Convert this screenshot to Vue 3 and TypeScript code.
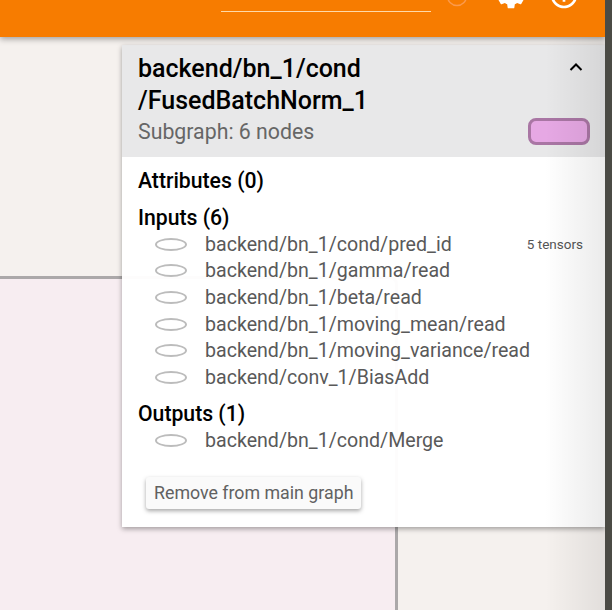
<template>
  <div class="screen">
    <div class="main">
      <!-- 顶部工具栏，图标上半部分被截掉 -->
      <div class="toolbar">
        <div class="search-line"></div>
        <svg class="tool-icon ring" viewBox="0 0 24 24" width="24" height="24">
          <circle cx="12" cy="12" r="9.5" fill="none" stroke="#fb9a4c" stroke-width="1.5" />
        </svg>
        <svg class="tool-icon gear" viewBox="0 0 24 24" width="32" height="32">
          <path fill="#fff" d="M19.43 12.98c.04-.32.07-.64.07-.98s-.03-.66-.07-.98l2.11-1.65c.19-.15.24-.42.12-.64l-2-3.46c-.12-.22-.39-.3-.61-.22l-2.49 1c-.52-.4-1.08-.73-1.69-.98l-.38-2.65C14.46 2.18 14.25 2 14 2h-4c-.25 0-.46.18-.49.42l-.38 2.65c-.61.25-1.17.59-1.69.98l-2.49-1c-.23-.09-.49 0-.61.22l-2 3.46c-.13.22-.07.49.12.64l2.11 1.65c-.04.32-.07.65-.07.98s.03.66.07.98l-2.11 1.65c-.19.15-.24.42-.12.64l2 3.46c.12.22.39.3.61.22l2.49-1c.52.4 1.08.73 1.69.98l.38 2.65c.03.24.24.42.49.42h4c.25 0 .46-.18.49-.42l.38-2.65c.61-.25 1.17-.59 1.69-.98l2.49 1c.23.09.49 0 .61-.22l2-3.46c.12-.22.07-.49-.12-.64l-2.11-1.65zM12 15.5c-1.93 0-3.5-1.57-3.5-3.5s1.57-3.5 3.5-3.5 3.5 1.57 3.5 3.5-1.57 3.5-3.5 3.5z" />
        </svg>
        <svg class="tool-icon info" viewBox="0 0 24 24" width="32" height="32">
          <path fill="#fff" d="M11 7h2v2h-2zm0 4h2v6h-2zm1-9C6.48 2 2 6.48 2 12s4.48 10 10 10 10-4.48 10-10S17.52 2 12 2zm0 18c-4.41 0-8-3.59-8-8s3.59-8 8-8 8 3.59 8 8-3.59 8-8 8z" />
        </svg>
      </div>

      <div class="canvas">
        <!-- 图上的节点分组 -->
        <div class="graph-group"></div>

        <!-- 节点信息面板 -->
        <div class="info-card">
          <div class="card-header">
            <div class="card-title">backend/bn_1/cond<br />/FusedBatchNorm_1</div>
            <div class="card-sub">Subgraph: {{ nodeCount }} nodes</div>
            <svg class="collapse" viewBox="0 0 14 10" width="14" height="10">
              <path d="M1.5 8 L7 2.5 L12.5 8" fill="none" stroke="#000" stroke-width="2" />
            </svg>
            <div class="swatch"></div>
          </div>
          <div class="card-body">
            <div class="section-title">Attributes (0)</div>
            <div class="section-title inputs-title">Inputs ({{ inputs.length }})</div>
            <div v-for="(name, i) in inputs" :key="name" class="node-row">
              <span class="node-shape"></span>
              <span class="node-name">{{ name }}</span>
              <span v-if="i === 0" class="tensors">5 tensors</span>
            </div>
            <div class="section-title outputs-title">Outputs ({{ outputs.length }})</div>
            <div v-for="name in outputs" :key="name" class="node-row">
              <span class="node-shape"></span>
              <span class="node-name">{{ name }}</span>
            </div>
            <button class="remove-btn">Remove from main graph</button>
          </div>
        </div>
      </div>

      <div class="edge-shade"></div>
    </div>
    <div class="window-edge"></div>
  </div>
</template>

<script setup lang="ts">
const nodeCount = 6;

const inputs: string[] = [
  'backend/bn_1/cond/pred_id',
  'backend/bn_1/gamma/read',
  'backend/bn_1/beta/read',
  'backend/bn_1/moving_mean/read',
  'backend/bn_1/moving_variance/read',
  'backend/conv_1/BiasAdd',
];

const outputs: string[] = ['backend/bn_1/cond/Merge'];
</script>

<style>
html,
body {
  margin: 0;
  overflow: hidden;
}
</style>

<style scoped>
.screen {
  display: flex;
  width: 612px;
  height: 610px;
  font-family: Roboto, "Liberation Sans", sans-serif;
}

.main {
  position: relative;
  flex: 1;
  display: flex;
  flex-direction: column;
  overflow: hidden;
}

.window-edge {
  width: 7px;
  background-color: #4b4b45;
}

.edge-shade {
  position: absolute;
  top: 0;
  right: 0;
  bottom: 0;
  width: 60px;
  background: linear-gradient(to right, rgba(0, 0, 0, 0), rgba(0, 0, 0, 0.08));
  pointer-events: none;
}

.toolbar {
  position: relative;
  z-index: 2;
  flex: none;
  height: 37px;
  background-color: #f77c00;
  box-shadow: 0 2px 6px rgba(0, 0, 0, 0.35);
}

.search-line {
  position: absolute;
  left: 221px;
  top: 11px;
  width: 210px;
  height: 1px;
  background-color: #ffd9a8;
}

.tool-icon {
  position: absolute;
}

.ring {
  left: 445px;
  top: -16px;
}

.gear {
  left: 495px;
  top: -21px;
}

.info {
  left: 548px;
  top: -21px;
}

.canvas {
  position: relative;
  flex: 1;
  background-color: #f5f1ee;
}

.graph-group {
  position: absolute;
  left: -20px;
  top: 239px;
  width: 415px;
  height: 340px;
  border-top: 3px solid #aba8a9;
  border-right: 3px solid #aba8a9;
  border-top-right-radius: 8px;
  background-color: #f7edf1;
}

.info-card {
  position: absolute;
  left: 122px;
  top: 8px;
  width: 483px;
  height: 482px;
  background-color: rgba(255, 255, 255, 0.97);
  box-shadow: 0 2px 5px rgba(0, 0, 0, 0.35);
}

.card-header {
  position: relative;
  height: 112px;
  box-sizing: border-box;
  padding: 8px 16px 0;
  background-color: #e8e8e9;
}

.card-title {
  font-size: 25px;
  line-height: 32px;
  font-weight: 500;
  color: #000;
}

.card-sub {
  margin-top: 2px;
  font-size: 21.3px;
  line-height: 26px;
  color: #666;
}

.collapse {
  position: absolute;
  top: 17px;
  right: 22px;
}

.swatch {
  position: absolute;
  top: 73px;
  right: 15px;
  width: 62px;
  height: 27px;
  box-sizing: border-box;
  border: 3px solid #a976a4;
  border-radius: 8px;
  background-color: #e6a8e4;
}

.card-body {
  padding: 11px 16px 0;
}

.section-title {
  font-size: 21.2px;
  line-height: 26px;
  font-weight: 500;
  color: #000;
  margin-bottom: 0.4px;
}

.inputs-title {
  margin-top: 10.6px;
}

.outputs-title {
  margin-top: 10.2px;
}

.node-row {
  position: relative;
  display: flex;
  align-items: center;
  height: 26.6px;
  padding-left: 17px;
}

.node-shape {
  width: 32px;
  height: 13px;
  box-sizing: border-box;
  border: 2px solid #bcbcbc;
  border-radius: 50%;
  margin-right: 18px;
}

.node-name {
  font-size: 19.6px;
  color: #595959;
}

.tensors {
  position: absolute;
  top: 5px;
  right: 6px;
  font-size: 13.5px;
  color: #555;
}

.remove-btn {
  display: block;
  margin: 23px 0 0 8px;
  height: 32px;
  padding: 0 8px;
  border: none;
  border-radius: 3px;
  background-color: #fafafa;
  box-shadow: 0 2px 4px rgba(0, 0, 0, 0.35);
  font-family: inherit;
  font-size: 17.8px;
  color: #616161;
}
</style>
